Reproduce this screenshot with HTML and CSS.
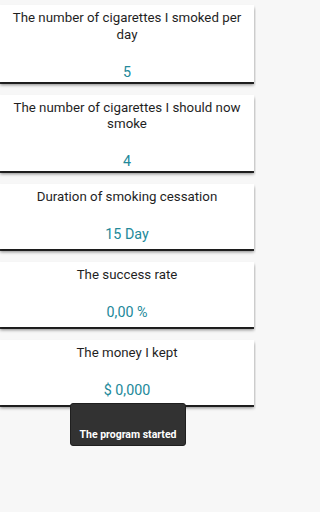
FILE: index.html
```html
<!DOCTYPE html>
<html>
<head>
<meta charset="utf-8">
<link rel="stylesheet" href="styles.css">
</head>
<body>
<div class="list">
  <div class="card">
    <div class="title">The number of cigarettes I smoked per day</div>
    <div class="value">5</div>
  </div>
  <div class="card">
    <div class="title">The number of cigarettes I should now smoke</div>
    <div class="value">4</div>
  </div>
  <div class="card">
    <div class="title">Duration of smoking cessation</div>
    <div class="value">15 Day</div>
  </div>
  <div class="card">
    <div class="title">The success rate</div>
    <div class="value">0,00 %</div>
  </div>
  <div class="card">
    <div class="title">The money I kept</div>
    <div class="value">$ 0,000</div>
  </div>
</div>
<div class="toast">The program started</div>
</body>
</html>
```
FILE: styles.css
```css
html, body {
  margin: 0;
  padding: 0;
}
body {
  background: #f7f7f7;
  font-family: Roboto, "Liberation Sans", sans-serif;
  width: 256px;
  height: 512px;
  position: relative;
  overflow: hidden;
}
.list {
  display: flex;
  flex-direction: column;
  gap: 13px;
  padding-top: 5px;
  padding-right: 2px;
}
.card {
  box-sizing: border-box;
  min-height: 65px;
  background: #ffffff;
  box-shadow: 0 2px 0 rgba(0,0,0,0.8), 0 3px 3px rgba(0,0,0,0.45);
  padding: 5px 4px 1px;
  text-align: center;
}
.title {
  font-size: 13.3px;
  line-height: 16.5px;
  color: #1f1f1f;
}
.value {
  margin-top: 19.5px;
  font-size: 14.3px;
  line-height: 18px;
  color: #23899a;
}
.toast {
  position: absolute;
  left: 70px;
  top: 403px;
  width: 116px;
  box-sizing: border-box;
  height: 43px;
  padding-top: 24px;
  background: #323232;
  border: 1px solid #1f1f1f;
  border-radius: 3px;
  color: #ffffff;
  font-size: 10.5px;
  font-weight: bold;
  line-height: 13px;
  text-align: center;
}
```
